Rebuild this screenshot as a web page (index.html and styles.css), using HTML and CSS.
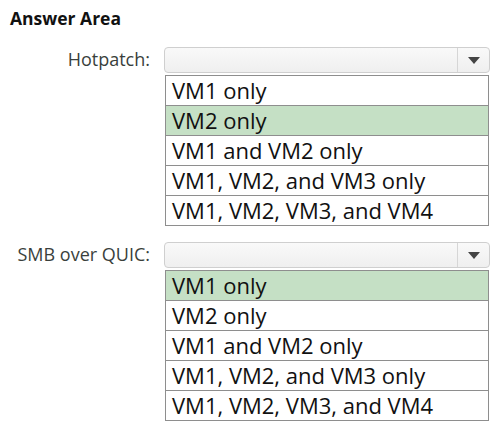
FILE: index.html
```html
<html>
    <head>
        <meta name="viewport" content="width=device-width, initial-scale=1" />
        <link rel="stylesheet" href="styles.css">
    </head>
    <body>
        <h3 class="title">Answer Area</h3>
        <div class="question">
            <div class="label">Hotpatch:</div>
            <div class="field">
                <div class="select"><span class="arrow"></span></div>
                <ul class="options">
                    <li>VM1 only</li>
                    <li class="picked">VM2 only</li>
                    <li>VM1 and VM2 only</li>
                    <li>VM1, VM2, and VM3 only</li>
                    <li>VM1, VM2, VM3, and VM4</li>
                </ul>
            </div>
        </div>
        <div class="question">
            <div class="label">SMB over QUIC:</div>
            <div class="field">
                <div class="select"><span class="arrow"></span></div>
                <ul class="options">
                    <li class="picked">VM1 only</li>
                    <li>VM2 only</li>
                    <li>VM1 and VM2 only</li>
                    <li>VM1, VM2, and VM3 only</li>
                    <li>VM1, VM2, VM3, and VM4</li>
                </ul>
            </div>
        </div>
    </body>
</html>
```

FILE: styles.css
```css
body {
    margin: 0;
    background: #fff;
    font-family: 'Open Sans', 'Noto Sans', sans-serif;
    color: #111;
}
.title {
    margin: 0;
    padding: 6px 0 0 10px;
    font-size: 17.5px;
    font-weight: bold;
    height: 40px;
    box-sizing: border-box;
}
.question {
    display: flex;
    align-items: flex-start;
    margin-top: 7px;
    margin-bottom: 16px;
}
.label {
    width: 150px;
    text-align: right;
    font-size: 18px;
    color: #3a3f3c;
}
.field {
    margin-left: 14px;
    width: 326px;
}
.select {
    height: 26px;
    box-sizing: border-box;
    border: 1px solid #cfcfcf;
    border-radius: 4px;
    background: linear-gradient(#f9f9f9, #efefef);
    display: flex;
    justify-content: flex-end;
}
.arrow {
    width: 31px;
    border-left: 1px solid #d6d6d6;
    display: flex;
    align-items: center;
    justify-content: center;
}
.arrow::after {
    content: '';
    border-left: 6px solid transparent;
    border-right: 6px solid transparent;
    border-top: 7px solid #444;
}
.options {
    list-style: none;
    margin: 2px 0 0 1px;
    padding: 0;
    width: 324px;
    box-sizing: border-box;
    border: 1px solid #8e8e8e;
}
.options li {
    height: 30px;
    box-sizing: border-box;
    padding-left: 6px;
    font-size: 22px;
    line-height: 28px;
    border-top: 1px solid #8e8e8e;
}
.options li:first-child {
    border-top: none;
    height: 29px;
}
.picked {
    background: #c5e0c5;
}
```
